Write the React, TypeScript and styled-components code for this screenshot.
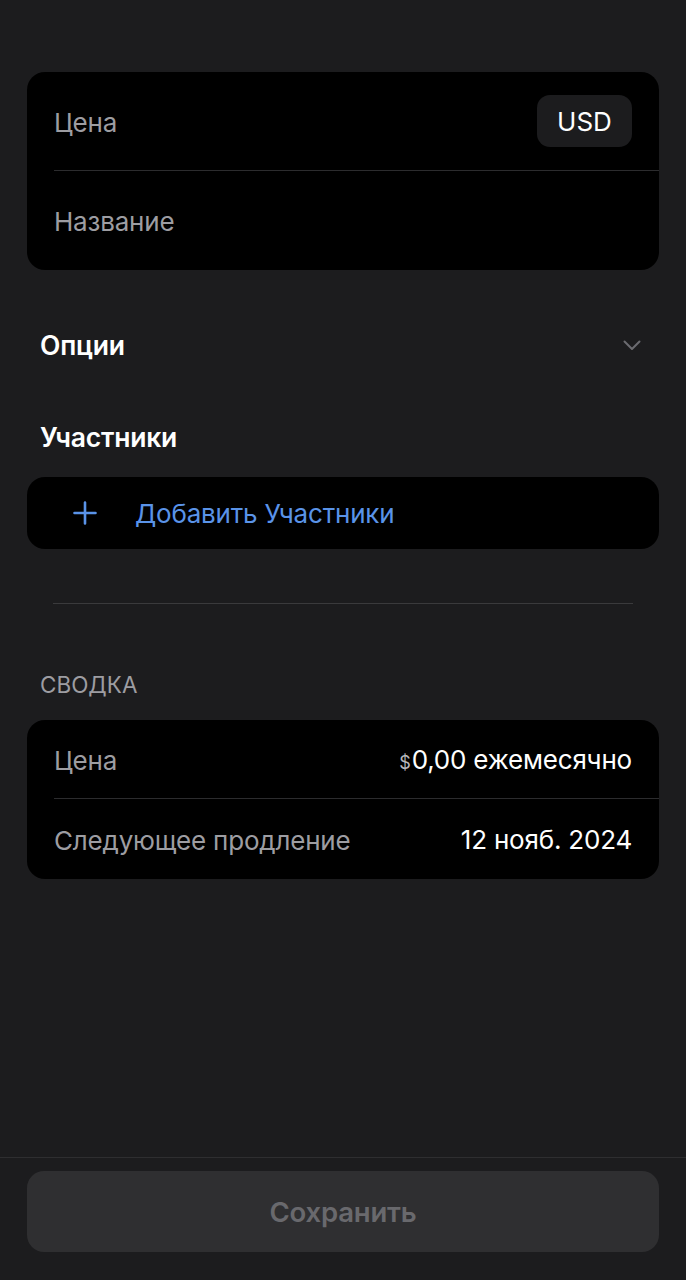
import React from 'react';
import styled, { createGlobalStyle } from 'styled-components';

const GlobalStyle = createGlobalStyle`
    html, body {
        margin: 0;
        padding: 0;
        background: #1c1c1e;
    }
    body {
        font-family: Inter, "Noto Sans", sans-serif;
        -webkit-font-smoothing: antialiased;
    }
`;

const Page = styled.div`
    display: flex;
    flex-direction: column;
    min-height: 1280px;
    background: #1c1c1e;
    color: #fff;
`;

const Content = styled.div`
    flex: 1 0 auto;
    display: flex;
    flex-direction: column;
    padding: 72px 27px 0;
`;

const Card = styled.div<{ mt?: number }>`
    background: #000;
    border-radius: 18px;
    overflow: hidden;
    margin-top: ${props => props.mt || 0}px;
`;

const Row = styled.div<{ h: number; divider?: boolean }>`
    display: flex;
    align-items: center;
    justify-content: space-between;
    height: ${props => props.h}px;
    margin-left: 27px;
    padding-right: 27px;
    border-bottom: ${props => props.divider ? '1px solid #2c2c2e' : 'none'};
    font-size: 26px;
`;

const Label = styled.span`
    color: #9d9da2;
    letter-spacing: -0.2px;
    padding-top: 2px;
`;

const Value = styled.span`
    color: #fff;
    font-weight: 420;
    letter-spacing: -0.2px;
`;

const Dollar = styled.span`
    font-size: 18px;
    color: #b8b8bc;
    margin-right: 1px;
`;

const Chip = styled.div`
    display: flex;
    align-items: center;
    justify-content: center;
    width: 95px;
    height: 52px;
    border-radius: 13px;
    background: #1c1c1e;
    color: #fff;
    font-size: 26px;
`;

const SectionRow = styled.div<{ mt: number; h: number }>`
    display: flex;
    align-items: center;
    justify-content: space-between;
    margin-top: ${props => props.mt}px;
    height: ${props => props.h}px;
    padding: 0 18px 0 13px;
    font-size: 26.5px;
    font-weight: 600;
    letter-spacing: -0.2px;
`;

const AddRow = styled.div`
    display: flex;
    align-items: center;
    height: 72px;
    padding-left: 46px;
    gap: 38px;
    color: #5a93e8;
    font-size: 26px;
    letter-spacing: -0.2px;
`;

const Separator = styled.div`
    height: 1px;
    background: #3a3a3c;
    margin: 54px 26px 0;
`;

const Caption = styled.div`
    margin-top: 65px;
    height: 30px;
    padding-left: 13px;
    display: flex;
    align-items: center;
    color: #9d9da2;
    font-size: 22.5px;
    text-transform: uppercase;
`;

const Footer = styled.div`
    border-top: 1px solid #2e2e30;
    padding: 13px 27px 28px;
`;

const SaveButton = styled.button`
    width: 100%;
    height: 81px;
    border: none;
    border-radius: 17px;
    background: #2f2f31;
    color: #69696d;
    font-family: inherit;
    font-size: 27.5px;
    font-weight: 600;
    letter-spacing: -0.2px;
`;

function Chevron () {
    return <svg width="18" height="11" viewBox="0 0 18 11" fill="none">
        <path d="M1.5 1.5 L9 9 L16.5 1.5" stroke="#6b6b70" strokeWidth="2" strokeLinecap="round" strokeLinejoin="round"/>
    </svg>
}

function Plus () {
    return <svg width="24" height="24" viewBox="0 0 24 24" fill="none">
        <path d="M12 1.5 V22.5 M1.5 12 H22.5" stroke="#5a93e8" strokeWidth="2.6" strokeLinecap="round"/>
    </svg>
}

export default function App () {
    return <Page>
        <GlobalStyle/>
        <Content>
            <Card>
                <Row h={98} divider>
                    <Label>Цена</Label>
                    <Chip>USD</Chip>
                </Row>
                <Row h={99}>
                    <Label>Название</Label>
                </Row>
            </Card>

            <SectionRow mt={50} h={50}>
                <span>Опции</span>
                <Chevron/>
            </SectionRow>

            <SectionRow mt={47} h={40}>
                <span>Участники</span>
            </SectionRow>

            <Card mt={20}>
                <AddRow>
                    <Plus/>
                    <span>Добавить Участники</span>
                </AddRow>
            </Card>

            <Separator/>

            <Caption>Сводка</Caption>

            <Card mt={21}>
                <Row h={78} divider>
                    <Label>Цена</Label>
                    <Value><Dollar>$</Dollar>0,00 ежемесячно</Value>
                </Row>
                <Row h={80}>
                    <Label>Следующее продление</Label>
                    <Value>12 нояб. 2024</Value>
                </Row>
            </Card>
        </Content>

        <Footer>
            <SaveButton>Сохранить</SaveButton>
        </Footer>
    </Page>
}
